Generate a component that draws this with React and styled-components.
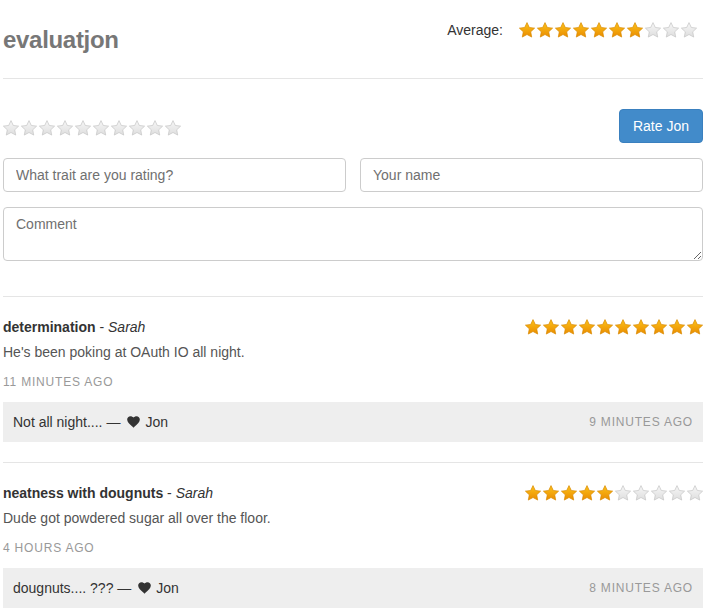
import styled, { createGlobalStyle } from 'styled-components';

const GlobalStyle = createGlobalStyle`
  body {
    margin: 0;
    background: #fff;
    font-family: "Liberation Sans", Arial, sans-serif;
    color: #333;
  }
  * { box-sizing: border-box; }
`;

const Page = styled.div`
  width: 706px;
  padding: 0 3px;
`;

const Header = styled.header`
  height: 78px;
  display: flex;
  justify-content: space-between;
  align-items: flex-start;
  padding-right: 6px;
`;

const Title = styled.h1`
  margin: 27px 0 0;
  font-size: 24px;
  line-height: 26px;
  font-weight: 700;
  color: #777;
  letter-spacing: -0.3px;
`;

const Average = styled.div`
  margin-top: 20px;
  display: flex;
  align-items: center;
  gap: 16px;
  font-size: 14px;
  line-height: 20px;
  color: #333;
`;

const Divider = styled.hr`
  margin: 0;
  border: none;
  border-top: 1px solid #e5e5e5;
`;

const RateRow = styled.div`
  margin-top: 30px;
  height: 34px;
  display: flex;
  justify-content: space-between;
  align-items: center;
`;

const StarRow = styled.div`
  display: flex;
  gap: 2px;
  margin-top: ${({ $offset }) => $offset || 0}px;
`;

const Button = styled.button`
  height: 34px;
  padding: 0 13px;
  border: 1px solid #3a80bf;
  border-radius: 4px;
  background: #428bca;
  color: #fff;
  font-family: inherit;
  font-size: 14px;
`;

const Fields = styled.div`
  margin-top: 15px;
  display: grid;
  grid-template-columns: 1fr 1fr;
  gap: 14px;
`;

const fieldBase = `
  width: 100%;
  border: 1px solid #ccc;
  border-radius: 4px;
  padding: 6px 12px;
  font-family: "Liberation Sans", Arial, sans-serif;
  font-size: 14px;
  color: #555;
  background: #fff;
  &::placeholder { color: #707070; }
`;

const Input = styled.input`
  ${fieldBase}
  height: 34px;
`;

const TextArea = styled.textarea`
  ${fieldBase}
  display: block;
  margin-top: 15px;
  height: 54px;
  resize: vertical;
  line-height: 20px;
`;

const FormEnd = styled.div`
  height: 35px;
`;

const Item = styled.article`
  padding: 20px 0 20px;
  border-top: 1px solid #e5e5e5;
`;

const ItemHead = styled.div`
  display: flex;
  justify-content: space-between;
  align-items: center;
  height: 20px;
`;

const Trait = styled.div`
  font-size: 14px;
  line-height: 20px;
  color: #333;
  b { font-weight: 700; }
  i { font-style: italic; }
`;

const Body = styled.p`
  margin: 5px 0 0;
  font-size: 14px;
  line-height: 20px;
  color: #555;
`;

const Time = styled.div`
  margin-top: 10px;
  font-size: 12px;
  line-height: 20px;
  letter-spacing: 0.8px;
  text-transform: uppercase;
  color: #999;
`;

const Reply = styled.div`
  margin-top: 10px;
  height: 40px;
  padding: 0 10px;
  display: flex;
  justify-content: space-between;
  align-items: center;
  background: #eee;
  font-size: 14px;
  color: #333;
`;

const ReplyText = styled.span`
  display: flex;
  align-items: center;
  gap: 4px;
`;

const Heart = styled.svg`
  width: 13px;
  height: 12px;
  margin: 0 1px 0 3px;
`;

const ReplyTime = styled.span`
  font-size: 12px;
  letter-spacing: 0.8px;
  text-transform: uppercase;
  color: #999;
`;

const STAR = 'M8 0.6 L10.29 5.44 L15.61 6.13 L11.71 9.81 L12.7 15.07 L8 12.5 L3.3 15.07 L4.29 9.81 L0.39 6.13 L5.71 5.44 Z';

function Star({ on }) {
  return (
    <svg width="16" height="16" viewBox="0 0 16 16">
      <path
        d={STAR}
        fill={on ? 'url(#starOn)' : 'url(#starOff)'}
        stroke={on ? '#d98a00' : '#c4c4c4'}
        strokeWidth="0.7"
        strokeLinejoin="round"
      />
    </svg>
  );
}

function Stars({ value, offset }) {
  return (
    <StarRow $offset={offset}>
      {Array.from({ length: 10 }, (_, i) => <Star key={i} on={i < value} />)}
    </StarRow>
  );
}

const ratings = [
  {
    trait: 'determination',
    who: 'Sarah',
    stars: 10,
    text: "He's been poking at OAuth IO all night.",
    ago: '11 minutes ago',
    reply: 'Not all night....',
    replyAgo: '9 minutes ago',
  },
  {
    trait: 'neatness with dougnuts',
    who: 'Sarah',
    stars: 5,
    text: 'Dude got powdered sugar all over the floor.',
    ago: '4 hours ago',
    reply: 'dougnuts.... ???',
    replyAgo: '8 minutes ago',
  },
];

export default function App() {
  return (
    <>
      <GlobalStyle />
      <svg width="0" height="0" style={{ position: 'absolute' }}>
        <defs>
          <linearGradient id="starOn" x1="0" y1="0" x2="0" y2="1">
            <stop offset="0" stopColor="#fcc21a" />
            <stop offset="1" stopColor="#ea8c00" />
          </linearGradient>
          <linearGradient id="starOff" x1="0" y1="0" x2="0" y2="1">
            <stop offset="0" stopColor="#f7f7f7" />
            <stop offset="1" stopColor="#dedede" />
          </linearGradient>
        </defs>
      </svg>
      <Page>
        <Header>
          <Title>evaluatjon</Title>
          <Average>
            Average:
            <Stars value={7} />
          </Average>
        </Header>
        <Divider />
        <RateRow>
          <Stars value={0} offset={4} />
          <Button>Rate Jon</Button>
        </RateRow>
        <Fields>
          <Input placeholder="What trait are you rating?" />
          <Input placeholder="Your name" />
        </Fields>
        <TextArea placeholder="Comment" />
        <FormEnd />
        {ratings.map((r) => (
          <Item key={r.trait}>
            <ItemHead>
              <Trait><b>{r.trait}</b> - <i>{r.who}</i></Trait>
              <Stars value={r.stars} />
            </ItemHead>
            <Body>{r.text}</Body>
            <Time>{r.ago}</Time>
            <Reply>
              <ReplyText>
                {r.reply} —
                <Heart viewBox="0 0 24 22">
                  <path d="M12 21.5 L10.3 19.9 C4.2 14.4 0.3 10.9 0.3 6.5 C0.3 3 3 0.3 6.5 0.3 C8.5 0.3 10.6 1.3 12 2.9 C13.4 1.3 15.5 0.3 17.5 0.3 C21 0.3 23.7 3 23.7 6.5 C23.7 10.9 19.8 14.4 13.7 19.9 Z" fill="#333" />
                </Heart>
                Jon
              </ReplyText>
              <ReplyTime>{r.replyAgo}</ReplyTime>
            </Reply>
          </Item>
        ))}
      </Page>
    </>
  );
}
